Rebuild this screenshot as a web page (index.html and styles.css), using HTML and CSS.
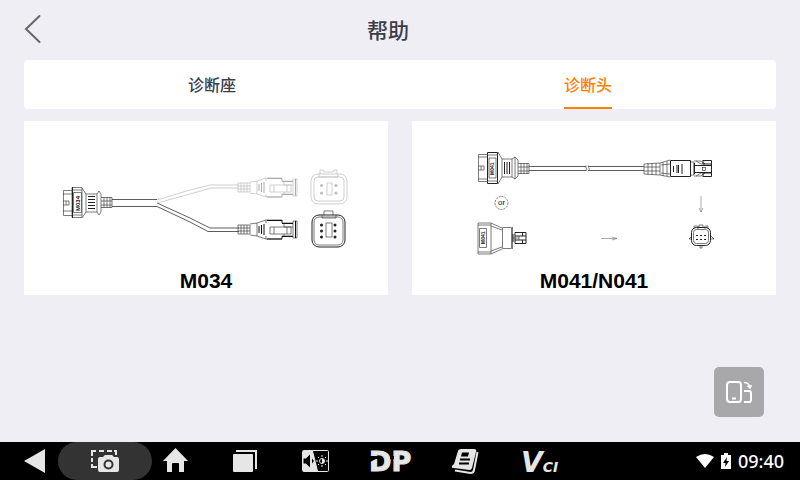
FILE: index.html
```html
<!DOCTYPE html>
<html lang="zh-CN">
  <head>
    <meta charset="UTF-8" />
    <meta name="viewport" content="width=device-width, initial-scale=1.0" />
    <title>帮助</title>
    <link rel="stylesheet" href="styles.css" />
  </head>
  <body>
    <header class="header">
      <button type="button" class="back" aria-label="返回">
        <svg width="24" height="30" viewBox="0 0 24 30">
          <path d="M15.500 2 2 15 15.500 28" />
        </svg>
      </button>
      <h1 class="title">帮助</h1>
    </header>

    <main class="content">
      <nav class="tabs">
        <a href="#socket" class="tab"><span class="tab-label">诊断座</span></a>
        <a href="#plug" class="tab"><span class="tab-label active">诊断头</span></a>
      </nav>

      <section class="cards">
        <figure class="card">
          <svg class="drawing" viewBox="24 121 364 144">
            <defs>
              <g id="plug-side">
                <path d="M238 183h12v9h-12zM238 186h12M238 189h12M241 183v9M244 183v9M247 183v9" />
                <path d="M250 182 257 181 266 178H282V181H293M250 193 257 194 266 197H282V194H293M257 181v13M266 178v3M266 194v3M282 178v3M282 194v3" />
                <path d="M270 185h21v7h-21zM274 185v7M284 181v4h9M284 192v2M287 185v7" />
                <path d="M293 179h4v17h-4z" />
                <path class="heavy" d="M259 184v7M261.500 183v9M264 182v11M295.500 179v17M282 181.500h11M282 194.500h11M267 178.500h15M267 197h15" />
              </g>
            </defs>

            <!-- vehicle side connector -->
            <path d="M72 190.500h-8.500v25h8.500M63 201h6v4h-6M66 201v4M63 194h9M63 211h9" />
            <path d="M72 187.500h10v30h-10zM72 190h10M72 215h10M82 188l4 6h11l2-3 2 3v18l-2 3-2-3H86l-4 6M86 194v18M97 194v18" />
            <path d="M73.500 192.500h8v20h-8z" />
            <path class="heavy" d="M72.500 187v31M88 196.500h7M88 199.500h7M88 202.500h7M88 205.500h7M88 208.500h7" />
            <text class="mark" transform="translate(80 211) rotate(-90)">M034</text>
            <path d="M101 197.500h11v10h-11M101 201h11M101 205h11M104 197v11M107 197v11M110 197v11" />

            <!-- cable split -->
            <path class="cable" d="M112 199.500H157M112 206.500H157L190 222 208 231.500H239M157 203 190 218 210 228H239" />
            <path class="pale" d="M157 200 190 190 210 185H239M157 203 190 194 211 188H239" />

            <use href="#plug-side" class="pale" />
            <use href="#plug-side" y="42" />

            <!-- plug faces -->
            <g class="pale">
              <path d="M320 174v-4h3l1 2h9l1-2h3v4M319 174v3h19v-3" />
              <rect x="311" y="174" width="36" height="30" rx="7" />
              <rect x="314" y="177" width="30" height="24" rx="4" />
              <rect x="327" y="183" width="5" height="12" />
              <path class="pins" d="M321.500 185.500h0M336 185.500h0M321.500 193h0M336 193h0" />
            </g>
            <path d="M324 215v-4h9v4M322 215v3h14v-3" />
            <rect x="312" y="215" width="33" height="32" rx="7" class="heavy" />
            <rect x="314" y="217" width="29" height="28" rx="5" />
            <rect x="326" y="223" width="6" height="14" />
            <path class="pins" d="M321.500 225h0M335 225h0M321.500 231h0M335 231h0M321.500 237h0M335 237h0" />
          </svg>
          <figcaption class="caption">M034</figcaption>
        </figure>

        <figure class="card">
          <svg class="drawing" viewBox="412 121 364 144">
            <!-- moulded connector with cable -->
            <path d="M487 154.500h-8.500v27h8.500M478 166h6v4h-6M481 166v4M478 157h9M478 179h9" />
            <path class="heavy" d="M487.500 152.500h10v31h-10z" />
            <path d="M489 158h7v20h-7zM487 155h11M487 181h11M498 152l4 7h10l3-2 3 3v16l-3 3-3-2h-10l-4 7M502 159v18M512 159v18M515 157v22" />
            <path class="heavy" d="M504.500 162v12M507 162v12M509.500 162v12" />
            <text class="mark small" transform="translate(494 175) rotate(-90)">M041</text>
            <path d="M518 163.500h11v10h-11M518 167h11M518 171h11M521 163v11M524 163v11M527 163v11" />
            <path class="cable" d="M529 166.500H586M529 170.500H586M588.500 166.500H644M588.500 170.500H644" />
            <path d="M586 165.500v2l1 1.500-1 2M588.500 165.500v2l1 1.500-1 2" />

            <!-- six pin plug -->
            <path d="M644 164l16-1v12l-16-1zM644 167h16M644 171h16M648 163v12M652 163v12M656 163v12M660 163l10-3M660 175l10 2M661 165l9-1M661 173l9 1M663 162v14M667 161v15" />
            <path d="M670.500 160.500h20v16h-20z" class="heavy" />
            <path class="heavy" d="M673.500 166v6M677 165v8M678.500 165v8M682 164v10" />
            <path d="M691 162h3v13h-3M694 163v11M694 161h7l4 3h-4l-5-3M694 176h7l4-3h-4l-5 3" />
            <path class="heavy" d="M703 160.500h8.500v16h-8.500M703 160v4h9M703 177v-4h9M694 165.500h18M694 172.500h18M694.500 163v11" />
            <rect x="702.500" y="167.500" width="3" height="3" />

            <!-- alternative adapter -->
            <circle cx="501.500" cy="203" r="6.500" class="dashed" />
            <text class="or" x="501.500" y="205" text-anchor="middle">or</text>
            <path d="M478 223h13v31h-13zM479.500 228.500h7v19h-7zM478 225h13M478 252h13M491 223l11 5M491 254l11-5M491 226l11 4M491 251l11-4M502.500 227.500h9v21h-9zM512.500 227v22" />
            <text class="mark small" transform="translate(485 244) rotate(-90)">M041</text>
            <path class="heavy" d="M515 232.500h11v11h-11zM513 234v8M515 236h11M515 240h11M522.500 232v4M522.500 240v4" />
            <path d="M519 236v4M513 238h6" />

            <!-- arrows -->
            <path class="arrow" d="M601 238.500h16M612 237l5 1.500-5 1.500M701 196v16M699 208l2 4 2-4" />

            <!-- plug face -->
            <path d="M694 229v-3h4v3M699 227v-2h4v2M705 229v-3h3v3M692 236l-3 3h3M711 236l3 3h-3M700 246v2h2v-2" />
            <rect x="691.500" y="227.500" width="19" height="18" rx="5" class="heavy" />
            <rect x="693.500" y="229.500" width="15" height="14" rx="3" />
            <path d="M696 235.500h2M700 235.500h2M704 235.500h2M696 239.500h2M700 239.500h2M704 239.500h2" class="heavy" />
          </svg>
          <figcaption class="caption">M041/N041</figcaption>
        </figure>
      </section>
    </main>

    <button type="button" class="rotate" aria-label="旋转屏幕">
      <svg width="30" height="26" viewBox="0 0 30 26">
        <rect x="3" y="3" width="14" height="20" rx="3" />
        <path d="M8 19.500h4M20 12h5a2 2 0 0 1 2 2v7a2 2 0 0 1-2 2h-5" />
        <path class="thin" d="M20 3.500q5 0 6 5M23.500 7l2.500 2 1.500-3" />
      </svg>
    </button>

    <footer class="navbar">
      <button type="button" class="nav-btn" aria-label="返回">
        <svg class="nav-icon" viewBox="0 0 40 38">
          <path d="M9 19 30 7V31Z" />
        </svg>
      </button>
      <button type="button" class="nav-btn pill" aria-label="截屏">
        <svg class="nav-icon" viewBox="0 0 40 38">
          <path class="line" d="M7 14V9H11M14 9H19M22 9H27M29 9H31V13M7 16V20M7 22V25H12" />
          <path d="M15 15h3l2-2h7l2 2h3q2 0 2 2v11q0 2-2 2H15q-2 0-2-2V17q0-2 2-2Z" />
          <circle cx="23.500" cy="22.500" r="4" class="ring" />
        </svg>
      </button>
      <button type="button" class="nav-btn" aria-label="主页">
        <svg class="nav-icon" viewBox="0 0 40 38">
          <path d="M20.500 6 33 19H29V30H24V22q0-1-1-1H18q-1 0-1 1V30H12V19H8Z" />
        </svg>
      </button>
      <button type="button" class="nav-btn" aria-label="最近任务">
        <svg class="nav-icon" viewBox="0 0 40 38">
          <rect x="8" y="12" width="20" height="18" rx="1" />
          <path class="line" d="M11 9H31V27" />
        </svg>
      </button>
      <button type="button" class="nav-btn" aria-label="声音和亮度">
        <svg class="nav-icon" viewBox="0 0 40 38">
          <rect x="7.500" y="8.500" width="26" height="21" rx="1" class="hair" />
          <path d="M8 9H18L23 29H8Z" />
          <path class="dark" d="M8.500 16.500h2.500l4-4v13l-4-4H8.500ZM17 16.500l2 2.500-2 2.500Z" />
          <circle cx="27" cy="19" r="2.500" class="hair" />
          <path d="M27 16.500a2.500 2.500 0 0 1 0 5Z" />
          <path class="hair" d="M27 13v2M27 23v2M31 19h2M21 19h2M23 15l1 1M31 15l-1 1M23 23l1-1M31 23l-1-1" />
        </svg>
      </button>
      <button type="button" class="nav-btn wide" aria-label="DP">
        <svg class="nav-icon" viewBox="0 0 40 38">
          <text class="logo dp" x="-1" y="29">DP</text>
          <path class="dark" d="M-2 14H11V17H6L-2 21ZM20 14H24V17H20Z" />
        </svg>
      </button>
      <button type="button" class="nav-btn wide" aria-label="数据">
        <svg class="nav-icon" viewBox="0 0 40 38">
          <path d="M16 7H29q3 0 2 3L27 26q-.5 2-2.500 2L9 26Q6 26 7 24L9 22 13 9q.5-2 3-2Z" />
          <path class="dark" d="M17 10.500H24L23 14.500H16Z" />
          <path class="line dark-line" d="M15 17.500H25M14 21.500H24" />
          <path class="line" d="M32.500 10 29 28q-.5 3-3.500 3L10 28.500" />
        </svg>
      </button>
      <button type="button" class="nav-btn wide" aria-label="VCI">
        <svg class="nav-icon" viewBox="0 0 40 38">
          <text class="logo vci" x="1" y="30">V<tspan class="ci">CI</tspan></text>
        </svg>
      </button>

      <div class="status">
        <svg width="18" height="16" viewBox="0 0 18 16">
          <path d="M0 4Q9-2 18 4L9 15Z" />
        </svg>
        <svg width="10" height="16" viewBox="0 0 10 16">
          <path d="M3 0H7V2H10V16H0V2H3Z" />
          <path class="dark" d="M6 4 2 10H4.500L4 14 8 8H5.500Z" />
        </svg>
        <time class="clock">09:40</time>
      </div>
    </footer>
  </body>
</html>
```
FILE: styles.css
```css
* {
  box-sizing: border-box;
}

body {
  display: flex;
  flex-direction: column;
  min-height: 100vh;
  margin: 0;
  background-color: #efeef4;
  color: #3c3c4b;
  font-family: "Noto Sans CJK SC", sans-serif;
}

button {
  display: flex;
  align-items: center;
  justify-content: center;
  padding: 0;
  border: none;
  background: none;
  cursor: pointer;
}

.header {
  display: flex;
  align-items: center;
  height: 60px;
  padding: 0 72px 2px 24px;
}

.back {
  justify-content: flex-start;
  width: 24px;
}

.back path {
  fill: none;
  stroke: #666;
  stroke-width: 2;
  stroke-linecap: round;
}

.title {
  flex: 1;
  margin: 0;
  font-size: 21px;
  font-weight: 500;
  line-height: 28px;
  text-align: center;
}

.content {
  flex: 1;
  padding: 0 24px 24px;
}

.tabs {
  display: flex;
  height: 49px;
  background-color: #fff;
  border-radius: 4px;
}

.tab {
  display: flex;
  flex: 1;
  justify-content: center;
  color: #3c3c4b;
  font-size: 16px;
  font-weight: 500;
  line-height: 49px;
  text-decoration: none;
}

.tab-label.active {
  color: #ff8000;
  border-bottom: 2px solid #ff8000;
}

.cards {
  display: grid;
  grid-template-columns: 1fr 1fr;
  gap: 24px;
  margin-top: 12px;
}

.card {
  margin: 0;
  background-color: #fff;
}

.drawing {
  display: block;
  width: 100%;
  fill: none;
  stroke: #444;
  stroke-width: 0.7;
}

.heavy {
  stroke: #222;
  stroke-width: 1;
}

.cable {
  stroke: #333;
  stroke-width: 0.8;
}

.pale {
  stroke: #bbb;
  --heavy: #aaa;
}

#plug-side .heavy {
  stroke: var(--heavy, #111);
}

.pins {
  stroke-width: 3;
  stroke-linecap: round;
}

.drawing > .pins {
  stroke: #222;
}

.dashed {
  stroke-dasharray: 2 1;
}

.arrow {
  stroke: #888;
}

.mark,
.or {
  fill: #111;
  stroke: none;
  font-family: "Liberation Sans", Arial, sans-serif;
  font-size: 6px;
  font-weight: bold;
}

.mark.small {
  font-size: 5px;
}

.or {
  font-size: 8px;
  font-weight: normal;
}

.caption {
  height: 30px;
  color: #000;
  font-family: "Liberation Sans", Arial, sans-serif;
  font-size: 21px;
  font-weight: bold;
  line-height: 32px;
  text-align: center;
}

.rotate {
  position: fixed;
  right: 36px;
  bottom: 63px;
  width: 50px;
  height: 50px;
  background-color: #a8a8aa;
  border-radius: 5px;
}

.rotate svg {
  fill: none;
  stroke: #fff;
  stroke-width: 2;
}

.rotate .thin {
  stroke-width: 1.5;
}

.navbar {
  display: flex;
  height: 38px;
  padding-right: 16px;
  background-color: #000;
}

.nav-btn {
  width: 70px;
}

.nav-btn.wide {
  width: 75px;
}

.nav-btn.pill {
  width: 94px;
  margin: 0 -12px;
  background-color: #333;
  border-radius: 19px;
}

.nav-icon {
  width: 40px;
  height: 38px;
  overflow: visible;
  fill: #e6e6e6;
}

.nav-btn.wide .nav-icon {
  margin-left: 5px;
}

.line,
.hair,
.ring {
  fill: none;
  stroke: #e6e6e6;
  stroke-width: 2;
}

.hair {
  stroke-width: 1;
}

.ring {
  stroke: #333;
}

.dark {
  fill: #000;
}

.dark-line {
  stroke: #000;
}

.logo {
  font-family: "DejaVu Sans", Verdana, sans-serif;
  font-size: 27px;
  font-weight: bold;
}

.dp {
  stroke: #e6e6e6;
  stroke-width: 1;
}

.vci {
  font-size: 28px;
  font-style: italic;
}

.ci {
  font-size: 14px;
}

.status {
  display: flex;
  align-items: center;
  gap: 7px;
  margin-left: auto;
  fill: #fff;
}

.clock {
  color: #fff;
  font-family: "Noto Sans", sans-serif;
  font-size: 18px;
  font-weight: 500;
}
```
